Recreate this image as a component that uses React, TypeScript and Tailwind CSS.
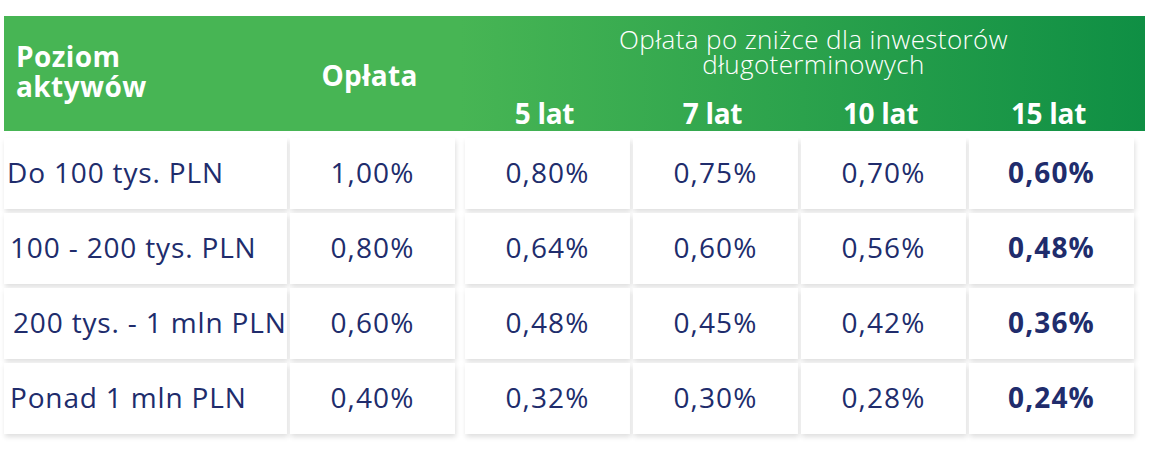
import React from "react";

const rows = [
  { label: "Do 100 tys. PLN", pl: "pl-[3px]", v: ["1,00%", "0,80%", "0,75%", "0,70%", "0,60%"] },
  { label: "100 - 200 tys. PLN", pl: "pl-[6px]", v: ["0,80%", "0,64%", "0,60%", "0,56%", "0,48%"] },
  { label: "200 tys. - 1 mln PLN", pl: "pl-[9px]", v: ["0,60%", "0,48%", "0,45%", "0,42%", "0,36%"] },
  { label: "Ponad 1 mln PLN", pl: "pl-[6px]", v: ["0,40%", "0,32%", "0,30%", "0,28%", "0,24%"] },
];

const cell = "bg-white h-[71px] flex items-center shadow-[1px_3px_5px_rgba(0,0,0,0.13)]";

export default function App() {
  return (
    <div
      className="w-[1164px] h-[461px] bg-white pt-[16px] pl-[4px] text-[#202c6c]"
      style={{ fontFamily: '"Open Sans", "Liberation Sans", sans-serif' }}
    >
      <div className="w-[1141px] h-[115px] flex bg-[linear-gradient(90deg,#47b554_0%,#47b554_40%,#0f8f44_100%)] text-white">
        <div className="w-[283px] pl-[12px] flex items-center">
          <div className="text-[28px] font-bold leading-[30px] tracking-[0.015em] pb-[5px]">
            Poziom
            <br />
            aktywów
          </div>
        </div>
        <div className="w-[175px] flex items-center justify-center pr-[10px] pt-[3px]">
          <span className="text-[28px] font-bold tracking-[0.01em]">Opłata</span>
        </div>
        <div className="flex-1 flex flex-col">
          <div className="pl-[20px] pt-[11px] text-center text-[26px] font-light leading-[25px] tracking-[0.015em]">
            Opłata po zniżce dla inwestorów
            <br />
            długoterminowych
          </div>
          <div className="flex gap-[3px] mt-[21px]">
            {["5 lat", "7 lat", "10 lat", "15 lat"].map((t) => (
              <div key={t} className="w-[165px] text-center text-[28px] font-bold leading-[30px] tracking-[-0.01em]">
                {t}
              </div>
            ))}
          </div>
        </div>
      </div>
      <div className="mt-[7px] flex flex-col gap-[4px]">
        {rows.map((r) => (
          <div key={r.label} className="flex gap-[3px]">
            <div className={`${cell} w-[283px] ${r.pl}`}>
              <span className="text-[28px] tracking-[0.03em] whitespace-nowrap pb-[3px]">{r.label}</span>
            </div>
            {r.v.map((x, i) => (
              <div
                key={i}
                className={`${cell} w-[165px] justify-center ${i === 1 ? "ml-[7px]" : ""}`}
              >
                <span className={`text-[28px] tracking-[0.04em] pb-[3px] ${i === 4 ? "font-bold" : ""}`}>
                  {x}
                </span>
              </div>
            ))}
          </div>
        ))}
      </div>
    </div>
  );
}
